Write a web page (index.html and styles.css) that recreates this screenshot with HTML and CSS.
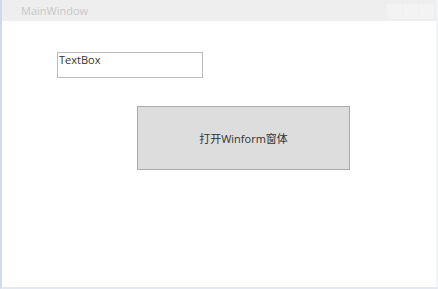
FILE: index.html
```html
<!DOCTYPE html>
<html lang="zh-CN">
<head>
    <meta charset="UTF-8">
    <title>MainWindow</title>
    <link rel="stylesheet" href="styles.css">
</head>
<body>
    <div class="window">
        <div class="title-bar">
            <div class="title">MainWindow</div>
            <div class="caption-buttons">
                <div class="caption-btn"></div>
                <div class="caption-btn"></div>
                <div class="caption-btn"></div>
            </div>
        </div>
        <div class="client">
            <div class="text-box">TextBox</div>
            <button class="open-button">打开Winform窗体</button>
        </div>
    </div>
</body>
</html>
```

FILE: styles.css
```css
body {
    margin: 0;
    font-family: 'Open Sans', 'Noto Sans CJK SC', sans-serif;
    background-color: #ffffff;
}

.window {
    width: 438px;
    height: 289px;
    box-sizing: border-box;
    display: flex;
    flex-direction: column;
    border-left: 2px solid #cfd9ee;
    border-right: 2px solid #f3f4f7;
    border-bottom: 2px solid #e4e8f0;
}

.title-bar {
    height: 21px;
    flex-shrink: 0;
    display: flex;
    justify-content: space-between;
    align-items: center;
    background-color: #eeeeee;
}

.title {
    padding-left: 19px;
    font-size: 11px;
    color: #c8c8c8;
}

.caption-buttons {
    display: flex;
    gap: 1px;
    padding-right: 2px;
    align-self: flex-start;
    margin-top: 4px;
}

.caption-btn {
    width: 15px;
    height: 15px;
    background-color: #f3f3f3;
}

.client {
    flex: 1;
    display: flex;
    flex-direction: column;
    align-items: flex-start;
    padding: 31px 0 0 55px;
}

.text-box {
    width: 146px;
    height: 26px;
    box-sizing: border-box;
    border: 1px solid #b9bcc2;
    padding: 0 0 0 1px;
    font-size: 11px;
    line-height: 14px;
    color: #333333;
}

.open-button {
    margin: 28px 0 0 80px;
    width: 213px;
    height: 64px;
    box-sizing: border-box;
    border: 1px solid #acacac;
    background-color: #dddddd;
    font-family: 'Open Sans', 'Noto Sans CJK SC', sans-serif;
    font-size: 11px;
    color: #333333;
    padding: 0;
}
```
